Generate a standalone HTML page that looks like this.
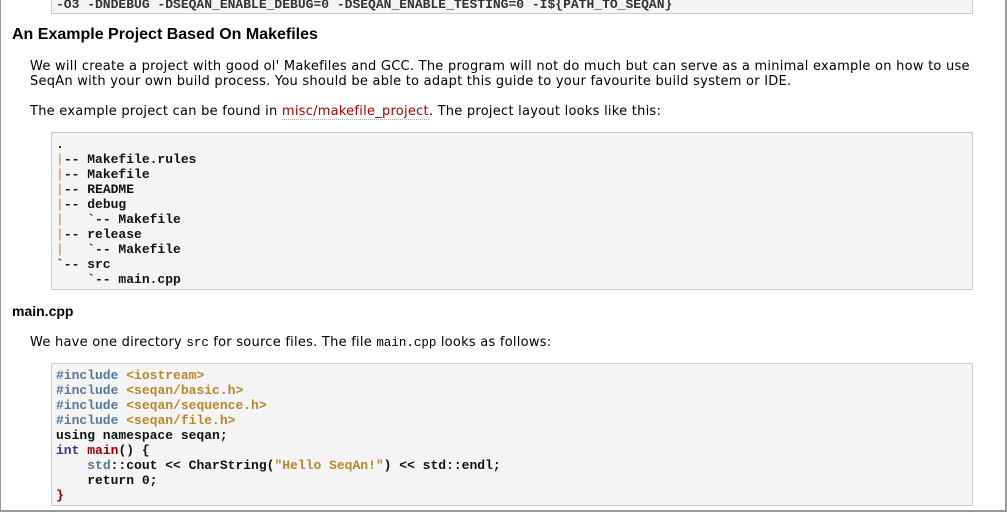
<!DOCTYPE html>
<html><head><style>
html,body{margin:0;padding:0;background:#fff;}
body{width:1007px;height:513px;overflow:hidden;position:relative;font-family:"DejaVu Sans",Verdana,sans-serif;font-size:13px;color:#000;}
.frame{position:absolute;left:0;top:-2px;width:1004px;height:512px;border-left:1px solid #999;border-right:2px solid #999;border-bottom:2px solid #999;}
.box{position:absolute;left:51px;width:920px;background:#f4f4f4;border:1px solid #ccc;}
pre{margin:0;font-family:"Liberation Mono","Courier New",monospace;font-size:13px;line-height:15px;font-weight:bold;color:#111;}
h1{position:absolute;left:12px;top:26px;margin:0;font-family:"Liberation Sans",Arial,sans-serif;font-weight:bold;font-size:16px;}
h2{position:absolute;left:12px;top:303px;margin:0;font-family:"Liberation Sans",Arial,sans-serif;font-weight:bold;font-size:14px;}
.p{position:absolute;left:30px;line-height:15px;white-space:nowrap;letter-spacing:0.25px;}
a{color:#a00;text-decoration:none;border-bottom:1px dotted #aaa;}
code{font-family:"Liberation Mono",monospace;font-size:12.5px;letter-spacing:0;}
.v{color:#c77e2a;font-weight:normal}
.k{color:#557799}
.s{color:#b8862b}
.t{color:#333399}
.f{color:#990000}
</style></head><body>
<div class="frame"></div>
<div class="box" style="top:-10px;height:22px;"><pre style="padding:0 0 0 4px;position:absolute;top:6px;color:#333">-O3 -DNDEBUG -DSEQAN_ENABLE_DEBUG=0 -DSEQAN_ENABLE_TESTING=0 -I${PATH_TO_SEQAN}</pre></div>
<h1>An Example Project Based On Makefiles</h1>
<div class="p" style="top:59px;">We will create a project with good ol' Makefiles and GCC. The program will not do much but can serve as a minimal example on how to use<br>SeqAn with your own build process. You should be able to adapt this guide to your favourite build system or IDE.</div>
<div class="p" style="top:104px;">The example project can be found in <a>misc/makefile_project</a>. The project layout looks like this:</div>
<div class="box" style="top:132px;height:156px;"><pre style="position:absolute;left:4px;top:4px;">.
<span class="v">|</span>-- Makefile.rules
<span class="v">|</span>-- Makefile
<span class="v">|</span>-- README
<span class="v">|</span>-- debug
<span class="v">|</span>   `-- Makefile
<span class="v">|</span>-- release
<span class="v">|</span>   `-- Makefile
`-- src
    `-- main.cpp</pre></div>
<h2>main.cpp</h2>
<div class="p" style="top:335px;">We have one directory <code>src</code> for source files. The file <code>main.cpp</code> looks as follows:</div>
<div class="box" style="top:363px;height:141px;"><pre style="position:absolute;left:4px;top:4px;"><span class="k">#include</span> <span class="s">&lt;iostream&gt;</span>
<span class="k">#include</span> <span class="s">&lt;seqan/basic.h&gt;</span>
<span class="k">#include</span> <span class="s">&lt;seqan/sequence.h&gt;</span>
<span class="k">#include</span> <span class="s">&lt;seqan/file.h&gt;</span>
using namespace seqan;
<span class="t">int</span> <span class="f">main</span>() {
    <span class="k">std</span>::cout &lt;&lt; CharString(<span class="s">"Hello SeqAn!"</span>) &lt;&lt; std::endl;
    return 0;
<span class="f">}</span></pre></div>
</body></html>
